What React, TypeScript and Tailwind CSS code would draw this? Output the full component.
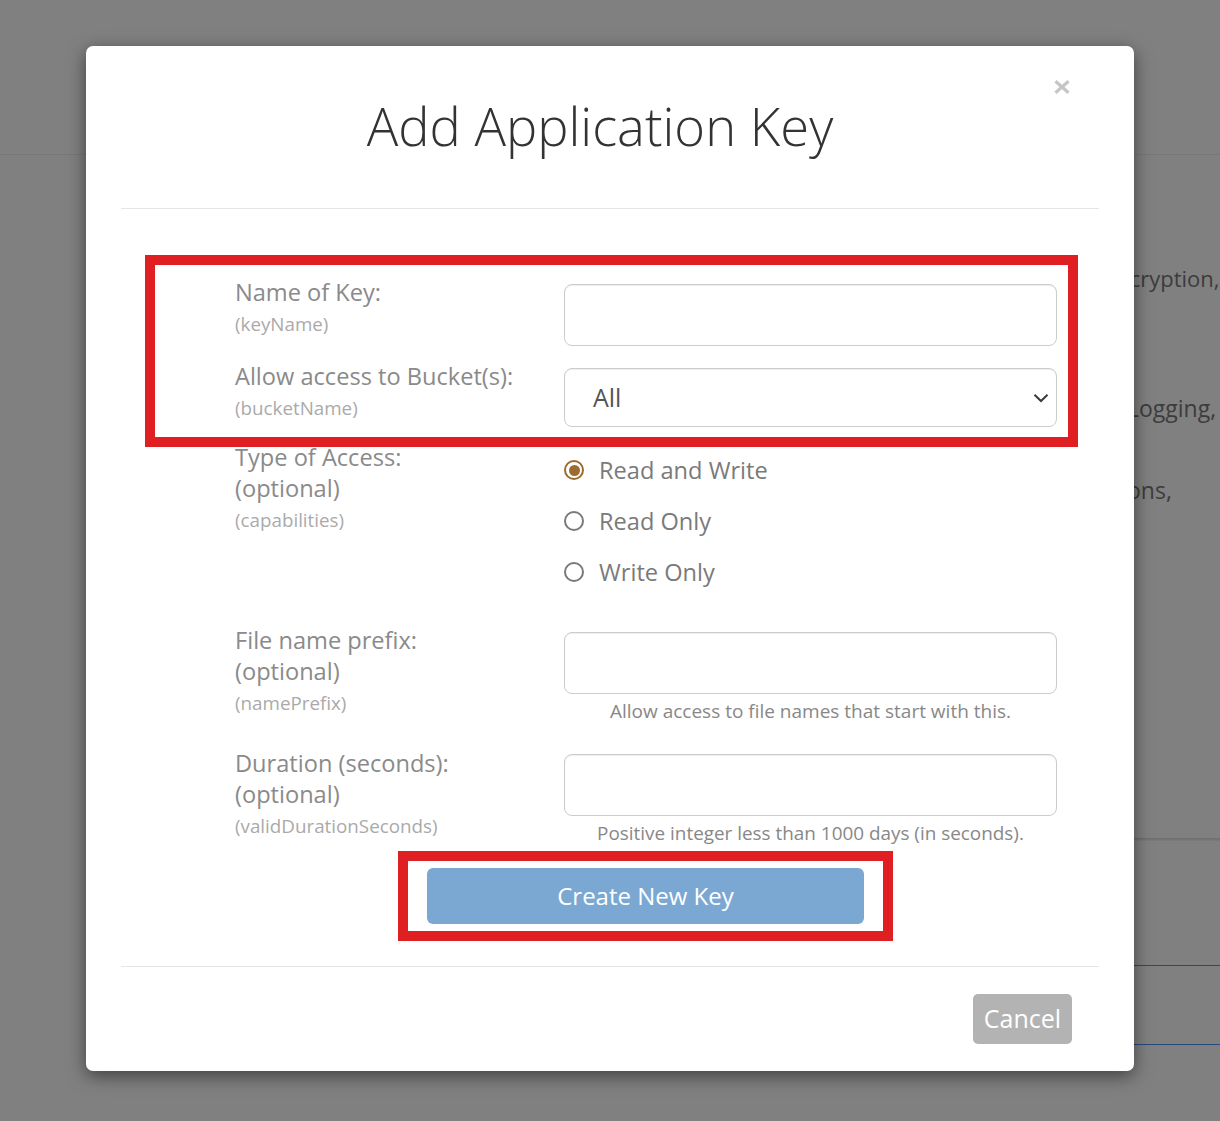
import React from "react";

function Radio({ label, checked }: { label: string; checked?: boolean }) {
  return (
    <div className="flex items-center h-[32px]">
      {checked ? (
        <span className="w-[20px] h-[20px] rounded-full border-2 border-[#9c6b30] flex items-center justify-center shrink-0">
          <span className="w-[11px] h-[11px] rounded-full bg-[#9c6b30]" />
        </span>
      ) : (
        <span className="w-[20px] h-[20px] rounded-full border-2 border-[#7a7a7a] shrink-0" />
      )}
      <span className="ml-[15px] text-[23.6px] leading-[32px] text-[#7a7a7a]">{label}</span>
    </div>
  );
}

function Label({ lines, sub }: { lines: string[]; sub: string }) {
  return (
    <div className="w-[329px] shrink-0 pt-[1px]">
      <div className="text-[23.6px] leading-[31px] text-[#8a8a8a]">
        {lines.map((l) => (
          <div key={l}>{l}</div>
        ))}
      </div>
      <div className="mt-[4px] text-[18.8px] leading-[24px] text-[#aaaaaa]">{sub}</div>
    </div>
  );
}

const inputCls =
  "block w-[493px] h-[62px] border border-[#cccccc] rounded-[8px] bg-white shadow-[inset_0_1px_1px_rgba(0,0,0,0.075)] outline-none";

export default function App() {
  return (
    <div className="relative w-[1220px] h-[1121px] bg-[#808080] overflow-hidden font-['Open_Sans',sans-serif]">
      {/* underlying page (dimmed) */}
      <div className="h-[155px] border-b border-[#787878]" />
      <div className="flex">
        <div className="w-[1104px] shrink-0" />
        <div className="flex-1 overflow-hidden whitespace-nowrap text-[23px] leading-[32px] text-[#3c3c3c]">
          <div className="mt-[107px] text-[22px]">Encryption,</div>
          <div className="mt-[98px] pl-[23px]">Logging,</div>
          <div className="mt-[50px] pl-[23px]">ons,</div>
          <div className="mt-[332px] h-[3px] bg-gradient-to-b from-[#6c6c6c] to-[#7c7c7c]" />
          <div className="mt-[124px] h-px bg-[#27497c]" />
          <div className="mt-[78px] h-px bg-[#27497c]" />
        </div>
      </div>

      {/* modal */}
      <div className="absolute left-[86px] top-[46px] w-[1048px] bg-white rounded-[7px] shadow-[0_5px_18px_rgba(0,0,0,0.5)]">
        <button className="absolute right-[64px] top-[34px] w-[16px] h-[14px]" aria-label="Close">
          <svg width="16" height="14" viewBox="0 0 16 14">
            <line x1="1.5" y1="1.2" x2="14.5" y2="12.8" stroke="#c6c6c6" strokeWidth="3.2" />
            <line x1="14.5" y1="1.2" x2="1.5" y2="12.8" stroke="#c6c6c6" strokeWidth="3.2" />
          </svg>
        </button>

        {/* header */}
        <div className="pt-[50px] pb-[52px] pr-[20px]">
          <h1 className="text-center text-[52.5px] leading-[60px] font-light text-[#333333]">
            Add Application Key
          </h1>
        </div>
        <div className="mx-[35px] h-px bg-[#e5e5e5]" />

        {/* body */}
        <div className="pl-[149px] pt-[67px] flex flex-col">
          <div className="flex">
            <Label lines={["Name of Key:"]} sub="(keyName)" />
            <input className={inputCls + " mt-[8px]"} />
          </div>

          <div className="flex mt-[14px]">
            <Label lines={["Allow access to Bucket(s):"]} sub="(bucketName)" />
            <div className="mt-[8px] w-[493px] h-[59px] border border-[#cccccc] rounded-[8px] bg-white shadow-[inset_0_1px_1px_rgba(0,0,0,0.075)] flex items-center justify-between pl-[28px] pr-[7px]">
              <span className="text-[25px] text-[#555555]">All</span>
              <svg width="16" height="10" viewBox="0 0 16 10">
                <polyline points="1.5,1.8 8,8 14.5,1.8" fill="none" stroke="#3a3a3a" strokeWidth="2" />
              </svg>
            </div>
          </div>

          <div className="flex mt-[14px]">
            <Label lines={["Type of Access:", "(optional)"]} sub="(capabilities)" />
            <div className="mt-[13px] flex flex-col gap-[19px]">
              <Radio label="Read and Write" checked />
              <Radio label="Read Only" />
              <Radio label="Write Only" />
            </div>
          </div>

          <div className="flex mt-[36px]">
            <Label lines={["File name prefix:", "(optional)"]} sub="(namePrefix)" />
            <div className="mt-[8px]">
              <input className={inputCls} />
              <div className="mt-[4px] w-[493px] text-center text-[19px] leading-[26px] text-[#888888]">
                Allow access to file names that start with this.
              </div>
            </div>
          </div>

          <div className="flex mt-[23px]">
            <Label lines={["Duration (seconds):", "(optional)"]} sub="(validDurationSeconds)" />
            <div className="mt-[7px]">
              <input className={inputCls} />
              <div className="mt-[4px] w-[493px] text-center text-[18.9px] leading-[26px] text-[#888888]">
                Positive integer less than 1000 days (in seconds).
              </div>
            </div>
          </div>

          <button className="mt-[22px] ml-[192px] w-[437px] h-[56px] rounded-[6px] bg-[#7ba8d2] text-white text-[24px]">
            Create New Key
          </button>
        </div>

        <div className="mt-[42px] mx-[35px] h-px bg-[#e5e5e5]" />

        {/* footer */}
        <div className="flex justify-end pt-[27px] pb-[27px] pr-[62px]">
          <button className="w-[99px] h-[50px] rounded-[5px] bg-[#b3b3b3] text-white text-[25px] flex items-center justify-center">
            Cancel
          </button>
        </div>

        {/* annotation boxes */}
        <div className="absolute left-[59px] top-[209px] w-[933px] h-[192px] border-[10px] border-[#e01f22] pointer-events-none" />
        <div className="absolute left-[312px] top-[805px] w-[495px] h-[90px] border-[10px] border-[#e01f22] pointer-events-none" />
      </div>
    </div>
  );
}
